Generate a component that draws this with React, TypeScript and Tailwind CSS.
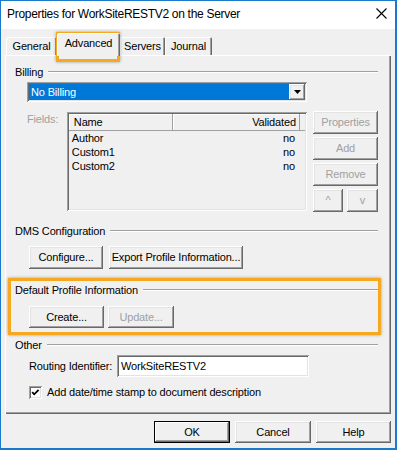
import React from "react";

const raised =
  "shadow-[inset_-1px_-1px_#696969,inset_1px_1px_#ffffff,inset_-2px_-2px_#a0a0a0,inset_2px_2px_#e3e3e3]";
const sunken =
  "shadow-[inset_1px_1px_#a0a0a0,inset_-1px_-1px_#ffffff,inset_2px_2px_#696969,inset_-2px_-2px_#e3e3e3]";

function Btn({
  label,
  className,
  disabled,
  isDefault,
}: {
  label: string;
  className: string;
  disabled?: boolean;
  isDefault?: boolean;
}) {
  const frame = isDefault
    ? "shadow-[inset_0_0_0_1px_#000000,inset_-2px_-2px_#696969,inset_2px_2px_#ffffff,inset_-3px_-3px_#a0a0a0]"
    : raised;
  return (
    <div
      className={
        "flex items-center justify-center bg-[#f0f0f0] leading-none " +
        frame +
        " " +
        (disabled ? "text-[#a0a0a0] " : "text-black ") +
        className
      }
    >
      {label}
    </div>
  );
}

function GroupHeader({ title, className }: { title: string; className: string }) {
  return (
    <div className={"flex items-center h-[14px] " + className}>
      <span className="leading-[14px] whitespace-nowrap">{title}</span>
      <div className="flex-1 ml-[5px] h-[2px] border-t border-[#a0a0a0] bg-white" />
    </div>
  );
}

function Tab({ label, className, selected }: { label: string; className: string; selected?: boolean }) {
  return (
    <div
      className={
        "flex justify-center rounded-t-[2px] bg-[#f0f0f0] shadow-[inset_1px_1px_#ffffff,inset_-1px_0_#696969,inset_-2px_0_#a0a0a0] " +
        (selected ? "relative z-10 h-[23px] mb-[-1px] pt-[4px] " : "h-[18px] pt-[3px] ") +
        className
      }
    >
      <span className="leading-[13px]">{label}</span>
    </div>
  );
}

export default function App() {
  const rows = ["Author", "Custom1", "Custom2"];
  return (
    <div className="relative w-[397px] h-[450px] overflow-hidden bg-[#f0f0f0] border-l border-t border-r-2 border-b-2 border-[#1979ca] text-[11px] tracking-[-0.16px] text-black font-['Liberation_Sans',Arial,sans-serif]">
      {/* Title bar */}
      <div className="flex items-center h-[28px] bg-white pl-[6px] pr-[8px] pb-[2px]">
        <span className="flex-1 text-[12px] tracking-[-0.3px] leading-none">Properties for WorkSiteRESTV2 on the Server</span>
        <svg width="11" height="11" viewBox="0 0 11 11" className="mt-[-2px]">
          <path d="M0.5 0.5 L10.5 10.5 M10.5 0.5 L0.5 10.5" stroke="#000" strokeWidth="1.1" fill="none" />
        </svg>
      </div>

      {/* Tabs */}
      <div className="flex items-end h-[26px] pl-[5px]">
        <Tab label="General" className="w-[51px]" />
        <Tab label="Advanced" className="w-[63px]" selected />
        <Tab label="Servers" className="w-[45px]" />
        <Tab label="Journal" className="w-[47px]" />
      </div>

      {/* Panel */}
      <div className="ml-[4px] w-[386px] h-[359px] flex flex-col pl-[10px] pr-[13px] shadow-[inset_1px_1px_#ffffff,inset_-1px_-1px_#696969,inset_-2px_-2px_#a0a0a0]">
        <GroupHeader title="Billing" className="mt-[10px]" />

        {/* Combobox */}
        <div className={"mt-[3px] ml-[12px] w-[280px] h-[20px] p-[2px] flex bg-white " + sunken}>
          <div className="flex-1 bg-[#0078d7] text-white flex items-center pl-[2px] leading-none">No Billing</div>
          <div className={"w-[16px] flex items-center justify-center bg-[#f0f0f0] " + raised}>
            <svg width="7" height="4" viewBox="0 0 7 4">
              <path d="M0 0 H7 L3.5 4 Z" fill="#000" />
            </svg>
          </div>
        </div>

        {/* Fields row */}
        <div className="mt-[9px] ml-[12px] flex items-start">
          <div className="w-[40px] pt-[1px] leading-[14px] text-[#a0a0a0]">Fields:</div>
          <div className={"mt-[1px] w-[241px] h-[99px] p-[2px] bg-[#f0f0f0] " + sunken}>
            <div className="flex h-[17px]">
              <div className="w-[104px] pl-[5px] leading-[17px] shadow-[inset_-1px_-1px_#a0a0a0,inset_1px_1px_#ffffff]">
                Name
              </div>
              <div className="w-[127px] pr-[4px] text-right leading-[17px] shadow-[inset_-1px_-1px_#a0a0a0,inset_1px_1px_#ffffff]">
                Validated
              </div>
              <div className="flex-1 shadow-[inset_0_-1px_#a0a0a0,inset_0_1px_#ffffff]" />
            </div>
            {rows.map((r) => (
              <div key={r} className="flex h-[14px] leading-[14px]">
                <div className="w-[104px] pl-[3px]">{r}</div>
                <div className="w-[127px] pr-[5px] text-right">no</div>
              </div>
            ))}
          </div>
          <div className="ml-[6px] w-[65px] flex flex-col gap-[3px]">
            <Btn label="Properties" className="w-[65px] h-[23px]" disabled />
            <Btn label="Add" className="w-[65px] h-[23px]" disabled />
            <Btn label="Remove" className="w-[65px] h-[23px]" disabled />
            <div className="flex gap-[4px]">
              <Btn label="^" className="w-[30px] h-[23px]" disabled />
              <Btn label="v" className="w-[31px] h-[23px]" disabled />
            </div>
          </div>
        </div>

        <GroupHeader title="DMS Configuration" className="mt-[12px]" />
        <div className="mt-[8px] ml-[14px] flex gap-[6px]">
          <Btn label="Configure..." className="w-[74px] h-[23px]" />
          <Btn label="Export Profile Information..." className="w-[134px] h-[23px]" />
        </div>

        <GroupHeader title="Default Profile Information" className="mt-[14px]" />
        <div className="mt-[9px] ml-[14px] flex gap-[4px]">
          <Btn label="Create..." className="w-[75px] h-[22px]" />
          <Btn label="Update..." className="w-[66px] h-[22px]" disabled />
        </div>

        <GroupHeader title="Other" className="mt-[10px]" />
        <div className="mt-[3px] ml-[14px] flex items-center h-[22px]">
          <div className="w-[88px] leading-[14px]">Routing Identifier:</div>
          <div className={"w-[192px] h-[22px] bg-white flex items-center pl-[4px] leading-none " + sunken}>
            WorkSiteRESTV2
          </div>
        </div>
        <div className="mt-[8px] ml-[14px] flex items-center h-[14px]">
          <div className={"w-[13px] h-[13px] bg-white flex items-center justify-center " + sunken}>
            <svg width="13" height="13" viewBox="0 0 13 13">
              <path d="M3.2 6.2 L5.2 8.3 L9.6 3.8" stroke="#000" strokeWidth="1.8" fill="none" />
            </svg>
          </div>
          <span className="ml-[5px] leading-[14px]">Add date/time stamp to document description</span>
        </div>
      </div>

      {/* Bottom buttons */}
      <div className="mt-[7px] ml-[153px] flex gap-[5px]">
        <Btn label="OK" className="w-[76px] h-[22px]" isDefault />
        <Btn label="Cancel" className="w-[76px] h-[22px]" />
        <Btn label="Help" className="w-[75px] h-[22px]" />
      </div>

      {/* Annotation highlights */}
      <div className="absolute left-[55px] top-[31px] w-[64px] h-[30px] border-[3px] border-[#f6a821] shadow-[0_0_3px_rgba(0,0,0,0.35)] pointer-events-none" />
      <div className="absolute left-[7px] top-[277px] w-[373px] h-[57px] border-[3px] border-[#f6a821] shadow-[0_0_3px_rgba(0,0,0,0.35)] pointer-events-none" />
    </div>
  );
}
